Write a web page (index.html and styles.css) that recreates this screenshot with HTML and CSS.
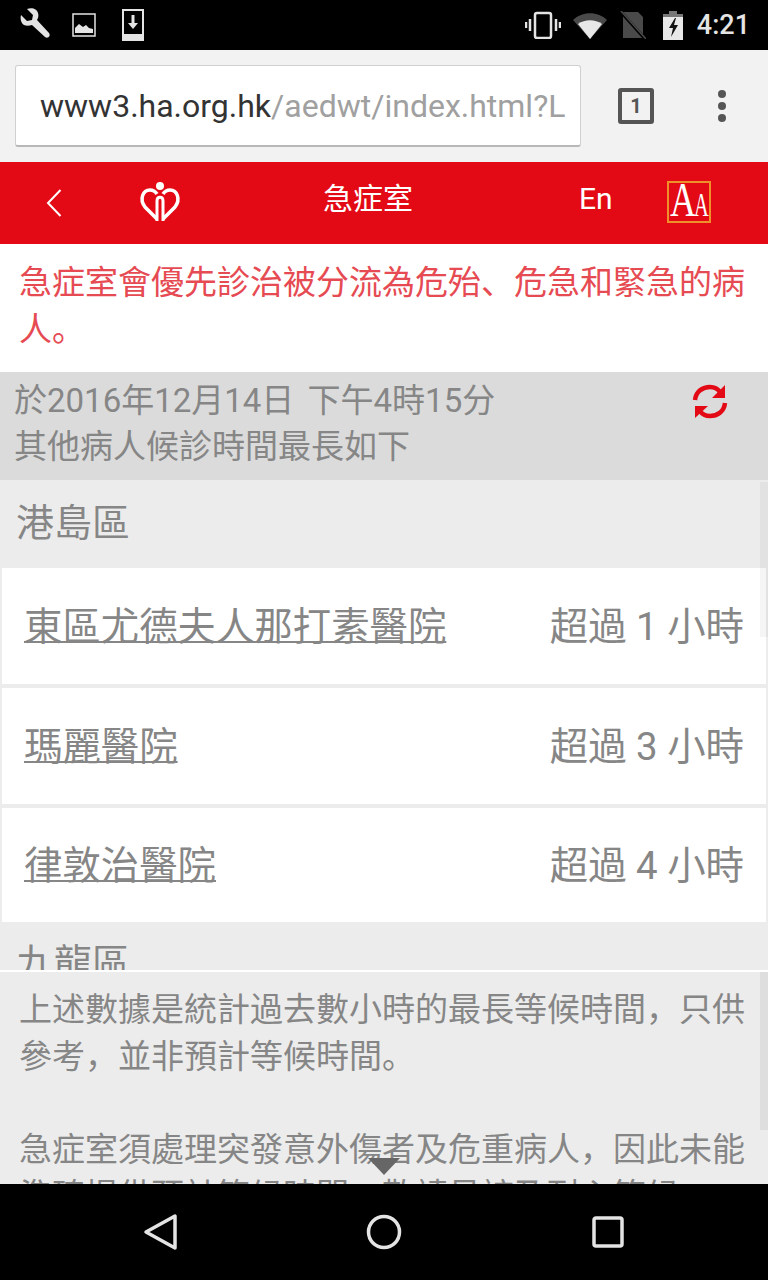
FILE: index.html
```html
<!DOCTYPE html>
<html>
<head>
    <meta charset="UTF-8">
    <title>急症室</title>
    <link rel="stylesheet" href="styles.css">
</head>
<body>
<div class="pantalla">
    <div class="estado">
        <div class="estado-grupo">
            <svg class="ic-llave" width="38" height="36" viewBox="0 0 38 36"><path d="M7 8l6 6 5-1 1-5-6-6c5-2 10 0 11 4 1 3 0 5-1 7l12 13c2 3-1 6-4 4L18 18c-3 1-6 1-8 0-3-2-4-6-3-10z" fill="#e4e4e4"/></svg>
            <svg class="ic-imagen" width="24" height="24" viewBox="0 0 24 24"><rect x="1" y="1" width="22" height="22" fill="none" stroke="#e4e4e4" stroke-width="1.500"/><path d="M3 20v-5l4-4 4 3 3-2 3 3 4 1v4z" fill="#e4e4e4"/></svg>
            <svg class="ic-descarga" width="22" height="32" viewBox="0 0 22 32"><rect x="1" y="1" width="20" height="30" fill="none" stroke="#e4e4e4" stroke-width="2"/><rect x="1" y="25" width="20" height="6" fill="#e4e4e4"/><path d="M9.500 6h3v8h3.500L11 20l-5-6h3.500z" fill="#e4e4e4"/></svg>
        </div>
        <div class="estado-grupo">
            <svg class="ic-vibrar" width="36" height="28" viewBox="0 0 36 28"><rect x="10" y="2" width="16" height="25" rx="2" fill="none" stroke="#e4e4e4" stroke-width="2.500"/><path d="M5 8v12M1 11v6M31 8v12M35 11v6" stroke="#e4e4e4" stroke-width="2.500"/></svg>
            <svg class="ic-wifi" width="34" height="28" viewBox="0 0 34 28"><path d="M0 9C9 0 25 0 34 9L17 28z" fill="#4a4a4a"/><path d="M5 13c7-5 17-5 24 0L17 28z" fill="#e8e8e8"/></svg>
            <svg class="ic-sim" width="26" height="28" viewBox="0 0 26 28"><path d="M3 1h15l5 5v21H3z" fill="#4a4a4a"/><path d="M1 1l24 27" stroke="#000" stroke-width="3"/><path d="M1 0l25 28" stroke="#4a4a4a" stroke-width="1.500"/></svg>
            <svg class="ic-bateria" width="20" height="29" viewBox="0 0 20 29"><path d="M6 0h8v3h6v26H0V3h6z" fill="#e8e8e8"/><path d="M6 0h8v3h6v3H0V3h6z" fill="#777"/><path d="M12 7l-6 10h4l-2 9 7-12h-4l2-7z" fill="#111"/></svg>
            <span class="hora">4:21</span>
        </div>
    </div>

    <div class="barra">
        <div class="url"><span>www3.ha.org.hk</span><span class="url-ruta">/aedwt/index.html?L</span></div>
        <div class="pestanas">1</div>
        <div class="menu"><i></i><i></i><i></i></div>
    </div>

    <div class="cabecera">
        <svg class="ic-atras" width="16" height="30" viewBox="0 0 16 30"><path d="M14.500 2L2 15l12.500 13" fill="none" stroke="#fff" stroke-width="2"/></svg>
        <svg class="logo" width="44" height="42" viewBox="0 0 44 42">
            <circle cx="22" cy="4" r="4" fill="#fff"/>
            <g fill="none" stroke="#fff" stroke-width="3.500">
                <path d="M19 37L7 25C1 17 5 8 12 8c3 0 5 1 7 4"/>
                <path d="M25 37l12-12C43 17 39 8 32 8c-3 0-5 1-7 4"/>
                <path d="M19 39V19c0-5 6-5 6 0v20" stroke-width="3"/>
            </g>
        </svg>
        <div class="titulo">急症室</div>
        <div class="idioma">En</div>
        <div class="fuente"><span class="fuente-a">A</span><span class="fuente-b">A</span></div>
    </div>

    <div class="aviso">急症室會優先診治被分流為危殆、危急和緊急的病人。</div>

    <div class="actualizado">
        <div>於2016年12月14日 下午4時15分<br>其他病人候診時間最長如下</div>
        <svg class="ic-recargar" width="36" height="38" viewBox="0 0 36 38">
            <g fill="none" stroke="#e30a16" stroke-width="4.500">
                <path d="M3 17C4 8 11 4 18 4c5 0 8 2 10 5"/>
                <path d="M33 20c-1 9-8 13-15 13-5 0-8-2-10-5"/>
            </g>
            <path d="M33 2v13H20z" fill="#e30a16"/>
            <path d="M3 35V23h13z" fill="#e30a16"/>
        </svg>
    </div>

    <div class="cuerpo">
        <div class="lista">
            <h3 class="distrito">港島區</h3>
            <div class="hospital"><a>東區尤德夫人那打素醫院</a><span>超過 1 小時</span></div>
            <div class="hospital"><a>瑪麗醫院</a><span>超過 3 小時</span></div>
            <div class="hospital hospital-ult"><a>律敦治醫院</a><span>超過 4 小時</span></div>
            <h3 class="distrito distrito-sig">九龍區</h3>
            <div class="barra-lista"></div>
        </div>
        <div class="nota">
            <p>上述數據是統計過去數小時的最長等候時間&#65292;只供參考&#65292;並非預計等候時間。</p>
            <p>急症室須處理突發意外傷者及危重病人&#65292;因此未能準確提供預計等候時間。敬請見諒及耐心等候。</p>
            <div class="barra-nota"></div>
            <div class="flecha"></div>
        </div>
    </div>

    <div class="navegacion">
        <svg width="36" height="38" viewBox="-2 0 36 38"><path d="M32 3v32L3 19z" fill="none" stroke="#e4e4e4" stroke-width="3.500" stroke-linejoin="round"/></svg>
        <svg width="36" height="36" viewBox="0 0 36 36"><circle cx="18" cy="18" r="15.500" fill="none" stroke="#e4e4e4" stroke-width="3.500"/></svg>
        <svg width="36" height="32" viewBox="0 0 36 32"><rect x="4" y="2" width="28" height="28" rx="2" fill="none" stroke="#e4e4e4" stroke-width="3.500"/></svg>
    </div>
</div>
</body>
</html>
```

FILE: styles.css
```css
* {
    box-sizing: border-box;
}
body {
    margin: 0;
    font-family: Roboto, "Noto Sans CJK SC", sans-serif;
    background: #000;
}
.pantalla {
    width: 768px;
    height: 1280px;
    display: flex;
    flex-direction: column;
    overflow: hidden;
}
.estado {
    height: 50px;
    flex: none;
    background: #000;
    display: flex;
    justify-content: space-between;
    align-items: center;
    padding: 0 18px 0 14px;
}
.estado-grupo {
    display: flex;
    align-items: center;
}
.ic-imagen {
    margin-left: 20px;
}
.ic-descarga {
    margin-left: 26px;
}
.ic-wifi {
    margin-left: 12px;
}
.ic-sim {
    margin-left: 13px;
}
.ic-bateria {
    margin-left: 17px;
}
.hora {
    margin-left: 14px;
    font-size: 27px;
    font-weight: 500;
    color: #e4e4e4;
}
.barra {
    height: 112px;
    flex: none;
    background: #f2f2f2;
    display: flex;
    align-items: center;
    padding-left: 15px;
}
.url {
    width: 566px;
    height: 82px;
    background: #fff;
    border: 1px solid #d0d0d0;
    border-bottom: 2px solid #b8b8b8;
    border-radius: 3px;
    padding: 2px 16px 0 24px;
    font-size: 32px;
    line-height: 76px;
    color: #333;
    white-space: nowrap;
    overflow: hidden;
}
.url-ruta {
    color: #a0a0a0;
}
.pestanas {
    width: 36px;
    height: 36px;
    margin-left: 37px;
    border: 4px solid #555;
    border-radius: 3px;
    font-size: 20px;
    font-weight: 700;
    line-height: 28px;
    text-align: center;
    color: #555;
}
.menu {
    margin-left: 64px;
    display: flex;
    flex-direction: column;
    gap: 4px;
}
.menu i {
    width: 8px;
    height: 8px;
    border-radius: 50%;
    background: #555;
}
.cabecera {
    height: 82px;
    flex: none;
    background: #e30a16;
    position: relative;
    color: #fff;
}
.ic-atras {
    position: absolute;
    left: 46px;
    top: 26px;
}
.logo {
    position: absolute;
    left: 138px;
    top: 20px;
}
.titulo {
    font-size: 30px;
    line-height: 74px;
    text-align: center;
    padding-right: 32px;
}
.idioma {
    position: absolute;
    left: 579px;
    top: 0;
    font-size: 30px;
    line-height: 74px;
}
.fuente {
    position: absolute;
    left: 667px;
    top: 19px;
    width: 44px;
    height: 42px;
    border: 2px solid #f0902a;
    display: flex;
    align-items: baseline;
    padding-left: 1px;
    font-family: "Liberation Serif", serif;
    line-height: 34px;
}
.fuente-a {
    display: inline-block;
    width: 24px;
    font-size: 48px;
    transform: scaleX(0.75);
    transform-origin: left;
}
.fuente-b {
    display: inline-block;
    width: 15px;
    font-size: 33px;
    transform: scaleX(0.62);
    transform-origin: left;
}
.aviso {
    height: 128px;
    flex: none;
    background: #fff;
    padding: 15px 19px 0;
    font-size: 33px;
    line-height: 47px;
    color: #e64a52;
}
.actualizado {
    height: 108px;
    flex: none;
    background: #dbdbdb;
    padding: 6px 14px 0;
    font-size: 33px;
    line-height: 46px;
    word-spacing: 5px;
    color: #868686;
    position: relative;
}
.ic-recargar {
    position: absolute;
    left: 692px;
    top: 11px;
}
.cuerpo {
    flex: 1;
    min-height: 0;
    display: flex;
    flex-direction: column;
}
.lista {
    flex: 1;
    min-height: 0;
    background: #ececec;
    overflow: hidden;
    position: relative;
}
.distrito {
    margin: 0;
    height: 88px;
    padding-left: 16px;
    font-size: 38px;
    font-weight: 400;
    line-height: 86px;
    color: #868686;
}
.distrito-sig {
    line-height: 74px;
}
.hospital {
    height: 116px;
    margin: 0 2px 4px;
    padding: 0 22px 6px 22px;
    background: #fff;
    display: flex;
    justify-content: space-between;
    align-items: center;
    font-size: 38.400px;
    color: #868686;
}
.hospital-ult {
    height: 114px;
}
.hospital a {
    text-decoration: underline;
    text-decoration-thickness: 2px;
}
.barra-lista {
    position: absolute;
    right: 0;
    top: 2px;
    width: 8px;
    height: 155px;
    background: rgba(0,0,0,0.04);
}
.nota {
    height: 214px;
    flex: none;
    background: #ececec;
    border-top: 2px solid #fff;
    padding: 15px 19px 0;
    font-size: 33px;
    line-height: 46.500px;
    color: #868686;
    overflow: hidden;
    position: relative;
}
.nota p {
    margin: 0 0 46.500px;
}
.barra-nota {
    position: absolute;
    right: 0;
    top: 0;
    width: 8px;
    height: 158px;
    background: rgba(0,0,0,0.06);
}
.flecha {
    position: absolute;
    left: 368px;
    top: 186px;
    width: 0;
    height: 0;
    border-left: 16px solid transparent;
    border-right: 16px solid transparent;
    border-top: 17px solid #666;
}
.navegacion {
    height: 96px;
    flex: none;
    background: #000;
    display: grid;
    grid-template-columns: 36px 36px 36px;
    justify-content: space-between;
    align-items: center;
    padding: 0 142px 0 141px;
}
```
